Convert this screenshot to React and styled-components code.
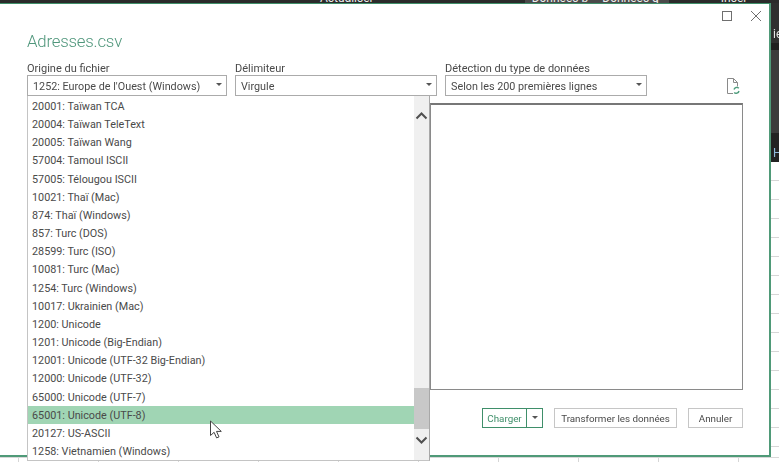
import React from 'react';
import styled, { createGlobalStyle } from 'styled-components';

const GlobalStyle = createGlobalStyle`
  html, body { margin: 0; padding: 0; background: #fff; overflow: hidden; }
  body { font-family: Roboto, "Open Sans", "Liberation Sans", sans-serif; }
`;

const encodings = [
  '20001: Taïwan TCA',
  '20004: Taïwan TeleText',
  '20005: Taïwan Wang',
  '57004: Tamoul ISCII',
  '57005: Télougou ISCII',
  '10021: Thaï (Mac)',
  '874: Thaï (Windows)',
  '857: Turc (DOS)',
  '28599: Turc (ISO)',
  '10081: Turc (Mac)',
  '1254: Turc (Windows)',
  '10017: Ukrainien (Mac)',
  '1200: Unicode',
  '1201: Unicode (Big-Endian)',
  '12001: Unicode (UTF-32 Big-Endian)',
  '12000: Unicode (UTF-32)',
  '65000: Unicode (UTF-7)',
  '65001: Unicode (UTF-8)',
  '20127: US-ASCII',
  '1258: Vietnamien (Windows)',
];

const selects = [
  { label: 'Origine du fichier', value: "1252: Europe de l'Ouest (Windows)", width: 200 },
  { label: 'Délimiteur', value: 'Virgule', width: 202 },
  { label: 'Détection du type de données', value: 'Selon les 200 premières lignes', width: 202 },
];

export default function App() {
  return (
    <Screen>
      <GlobalStyle />
      <Ribbon>
        <RibbonLabel $left={320}>Actualiser</RibbonLabel>
        <RibbonGroup>
          <RibbonLabel $left={7}>Données b</RibbonLabel>
          <RibbonLabel $left={14}>Données g</RibbonLabel>
        </RibbonGroup>
        <RibbonLabel $left={52}>Insér</RibbonLabel>
      </Ribbon>
      <Dialog>
        <WindowControls>
          <svg width="12" height="12" viewBox="0 0 12 12">
            <rect x="1.5" y="1.5" width="9" height="9" fill="none" stroke="#6f6f6f" />
          </svg>
          <svg width="12" height="12" viewBox="0 0 12 12">
            <path d="M1 1l10 10M11 1L1 11" stroke="#6f6f6f" fill="none" />
          </svg>
        </WindowControls>
        <Title>Adresses.csv</Title>
        <FieldRow>
          {selects.map(s => (
            <Field key={s.label} $width={s.width}>
              <FieldLabel>{s.label}</FieldLabel>
              <SelectBox>
                {s.value}
                <Caret />
              </SelectBox>
            </Field>
          ))}
          <RefreshIcon width="14" height="16" viewBox="0 0 14 16">
            <path d="M7 15.5H1.5v-15h6l4 4v4" fill="none" stroke="#8a8a8a" />
            <path d="M7.5.5v4h4" fill="none" stroke="#8a8a8a" />
            <path d="M8 11.5a2.8 2.8 0 0 1 4.8-1.2M13 13a2.8 2.8 0 0 1-4.8 1.4" fill="none" stroke="#4f9d7d" strokeWidth="1.4" />
          </RefreshIcon>
        </FieldRow>
        <Preview />
        <Footer>
          <SplitButton>
            <SplitMain>Charger</SplitMain>
            <SplitCaret><Caret /></SplitCaret>
          </SplitButton>
          <Button $width={123}>Transformer les données</Button>
          <Button $width={55}>Annuler</Button>
        </Footer>
        <Dropdown>
          <Options>
            {encodings.map(e => (
              <Option key={e} $active={e.startsWith('65001')}>{e}</Option>
            ))}
          </Options>
          <Scrollbar>
            <ScrollArrow width="13" height="8" viewBox="0 0 13 8">
              <path d="M1.5 6.5l5-5 5 5" fill="none" stroke="#505050" strokeWidth="2" />
            </ScrollArrow>
            <Thumb />
            <ScrollArrow width="13" height="8" viewBox="0 0 13 8">
              <path d="M1.5 1.5l5 5 5-5" fill="none" stroke="#505050" strokeWidth="2" />
            </ScrollArrow>
          </Scrollbar>
          <Cursor width="14" height="20" viewBox="0 0 14 20">
            <path d="M1.5 1v14.5l3.6-3.2 2.5 5.6 2.4-1-2.5-5.5h4.8z" fill="#fff" stroke="#444" />
          </Cursor>
        </Dropdown>
      </Dialog>
      <SideStrip>
        <SideBand $height={40} $color="#2f2f2f"><SideText $top={24} $color="#e6e6e6">ie</SideText></SideBand>
        <SideBand $height={7} $color="#1f1f1f" />
        <SideBand $height={83} $color="#3b3b3b" />
        <SideBand $height={29} $color="#222"><SideText $top={13} $color="#8fb8d8">H</SideText></SideBand>
        <Sheet />
      </SideStrip>
      <BottomStrip />
    </Screen>
  );
}

const Screen = styled.div`
  width: 779px;
  height: 462px;
  overflow: hidden;
  display: grid;
  grid-template-columns: 771px 8px;
  grid-template-rows: 3px 454px 5px;
  filter: blur(0.3px);
`;

const Ribbon = styled.div`
  grid-column: 1 / 3;
  background: #2b2b2b;
  display: flex;
  overflow: hidden;
  color: #eee;
  font-size: 12px;
  line-height: 3px;
`;

const RibbonGroup = styled.div`
  display: flex;
  margin-left: 151px;
  padding-right: 10px;
  background: #4a4a4a;
`;

const RibbonLabel = styled.span`
  margin-left: ${props => props.$left}px;
  margin-top: -3px;
  white-space: nowrap;
`;

const Dialog = styled.div`
  position: relative;
  box-sizing: border-box;
  background: #fff;
  border-top: 1px solid #3f8f6a;
  border-right: 2px solid #4f9a78;
  border-bottom: 2px solid #4f9a78;
  padding: 0 26px 0 27px;
  display: flex;
  flex-direction: column;
  color: #4a4a4a;
`;

const WindowControls = styled.div`
  display: flex;
  justify-content: flex-end;
  gap: 17px;
  margin-right: -19px;
  padding-top: 6px;
  height: 12px;
`;

const Title = styled.h1`
  margin: 7px 0 0;
  font-size: 16.8px;
  font-weight: 300;
  letter-spacing: -0.2px;
  line-height: 24px;
  color: #4f967b;
`;

const FieldRow = styled.div`
  display: flex;
  gap: 8px;
  margin-top: 7px;
`;

const Field = styled.div`
  width: ${props => props.$width}px;
  display: flex;
  flex-direction: column;
`;

const FieldLabel = styled.div`
  font-size: 11px;
  line-height: 18px;
  height: 15px;
`;

const SelectBox = styled.div`
  position: relative;
  box-sizing: border-box;
  height: 21px;
  border: 1px solid #ababab;
  padding-left: 5px;
  font-size: 10.8px;
  line-height: 21px;
  white-space: nowrap;
`;

const Caret = styled.i`
  position: absolute;
  right: 4px;
  top: 7px;
  width: 0;
  height: 0;
  border-left: 3px solid transparent;
  border-right: 3px solid transparent;
  border-top: 3px solid #555;
`;

const RefreshIcon = styled.svg`
  margin: 18px 0 0 71px;
`;

const Preview = styled.div`
  box-sizing: border-box;
  width: 313px;
  height: 287px;
  margin: 7px 0 0 auto;
  border: 1px solid #8a8a8a;
  border-top: 2px solid #777;
`;

const Footer = styled.div`
  display: flex;
  justify-content: flex-end;
  gap: 11px;
  margin-top: 18px;
`;

const Button = styled.div`
  box-sizing: border-box;
  width: ${props => props.$width}px;
  height: 20px;
  border: 1px solid #c6c6c6;
  font-size: 9.8px;
  line-height: 19px;
  text-align: center;
  white-space: nowrap;
`;

const SplitButton = styled.div`
  display: flex;
  width: 61px;
  height: 20px;
  box-sizing: border-box;
  border: 1px solid #3f8f6a;
  font-size: 9.8px;
  line-height: 19px;
  color: #3f8f6a;
`;

const SplitMain = styled.div`
  flex: 1;
  text-align: center;
  border-right: 1px solid #3f8f6a;
`;

const SplitCaret = styled.div`
  position: relative;
  width: 15px;
`;

const Dropdown = styled.div`
  position: absolute;
  left: 27px;
  top: 92px;
  width: 403px;
  height: 365px;
  box-sizing: border-box;
  border: 1px solid #c4c4c4;
  border-top: 0;
  border-right: 1px solid #a8a8a8;
  background: #fff;
  display: flex;
`;

const Options = styled.div`
  flex: 1;
  font-size: 10.8px;
  padding-top: 1px;
`;

const Option = styled.div`
  height: 18.16px;
  line-height: 20px;
  padding-left: 4px;
  background: ${props => (props.$active ? '#a0d5b4' : 'transparent')};
`;

const Scrollbar = styled.div`
  width: 15px;
  background: #f0f0f0;
  display: flex;
  flex-direction: column;
  align-items: center;
  position: relative;
  padding-top: 16px;
  box-sizing: border-box;
`;

const ScrollArrow = styled.svg`
  flex: none;
`;

const Thumb = styled.div`
  width: 100%;
  height: 41px;
  background: #c8c8c8;
  margin: 268px 0 7px;
`;

const Cursor = styled.svg`
  position: absolute;
  left: 181px;
  top: 324px;
`;

const SideStrip = styled.div`
  display: flex;
  flex-direction: column;
`;

const SideBand = styled.div`
  flex: none;
  height: ${props => props.$height}px;
  background: ${props => props.$color};
  overflow: hidden;
`;

const SideText = styled.div`
  margin: ${props => props.$top}px 0 0 2px;
  font-size: 12px;
  line-height: 14px;
  color: ${props => props.$color};
`;

const Sheet = styled.div`
  flex: 1;
  background: repeating-linear-gradient(#fff 0 18px, #d6d6d6 18px 19px);
`;

const BottomStrip = styled.div`
  grid-column: 1 / 3;
  border-top: 1px solid #d8d8d8;
  background: repeating-linear-gradient(90deg, #fff 0 18px, #d6d6d6 18px 19px, #fff 19px 80px);
`;
